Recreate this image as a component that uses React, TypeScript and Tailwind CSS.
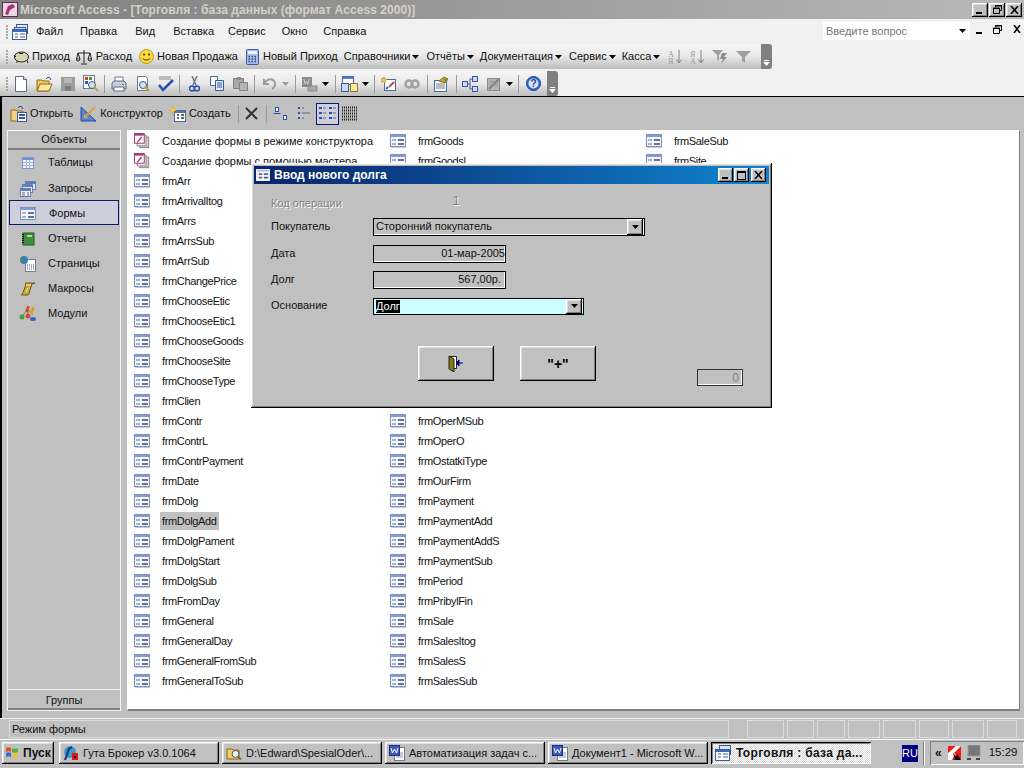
import React from "react";

const raised =
  "shadow-[inset_-1px_-1px_0_#000,inset_1px_1px_0_#fff,inset_-2px_-2px_0_#808080,inset_2px_2px_0_#dfdfdf]";

const FormIcon = ({ className = "" }: { className?: string }) => (
  <svg width="16" height="14" viewBox="0 0 16 14" className={className}>
    <rect x="0.5" y="0.5" width="15" height="12" fill="#f4f6fb" stroke="#7c92bc" />
    <rect x="1" y="1" width="14" height="2" fill="#7f9cd8" />
    <rect x="2" y="5" width="4" height="2" fill="#a9b4c8" />
    <rect x="8" y="5" width="6" height="2" fill="#66738f" />
    <rect x="2" y="9" width="4" height="2" fill="#a9b4c8" />
    <rect x="8" y="9" width="6" height="2" fill="#66738f" />
    <rect x="1" y="13" width="15" height="1" fill="#c4cad6" />
  </svg>
);

const WizardIcon = () => (
  <svg width="18" height="18" viewBox="0 0 18 18">
    <rect x="6.500" y="4.500" width="10" height="12" fill="#d8d4c8" stroke="#7f7f7f" />
    <rect x="3.500" y="2.500" width="10" height="12" fill="#eeeeee" stroke="#8a7a8a" />
    <rect x="0.500" y="0.500" width="11" height="11" fill="#fff" stroke="#8d2a62" />
    <rect x="1" y="1" width="10" height="2" fill="#b03a80" />
    <path d="M3 10 L8 4 L9 5 L4 11Z" fill="#a52a6a" />
    <path d="M14 15h3v2h-3z" fill="#999" />
  </svg>
);

const Caret = ({ c = "#000" }: { c?: string }) => (
  <svg width="7" height="4" viewBox="0 0 7 4" className="ml-[2px] shrink-0">
    <path d="M0 0h7L3.5 4z" fill={c} />
  </svg>
);

const Grip = () => (
  <div className="flex flex-col gap-[1px] w-[2px] h-[17px] justify-center shrink-0">
    {[0, 1, 2, 3, 4].map((i) => (
      <div key={i} className="w-[2px] h-[2px] bg-[#a8a8a8]" />
    ))}
  </div>
);

const Sep = ({ className = "" }: { className?: string }) => (
  <div className={"w-[1px] h-[18px] bg-[#9a9a9a] shrink-0 " + className} />
);

const EndCap = () => (
  <div className="absolute right-0 top-0 bottom-0 w-[11px] bg-[#808080] rounded-r-[3px] flex flex-col items-center justify-end pb-[3px] gap-[1px]">
    <div className="w-[5px] h-[1px] bg-white" />
    <svg width="7" height="4" viewBox="0 0 7 4">
      <path d="M0 0h7L3.5 4z" fill="#fff" />
    </svg>
  </div>
);

const tbBg = "bg-[linear-gradient(#f6f6f6,#e8e8e8_50%,#bcbcbc)]";

const Icon = ({ ml, children }: { ml: string; children: React.ReactNode }) => (
  <div className={"shrink-0 flex items-center " + ml}>{children}</div>
);

const ListItem = ({ name, wizard, selected }: { name: string; wizard?: boolean; selected?: boolean }) => (
  <div className="h-[20px] flex items-center whitespace-nowrap">
    <div className="w-[16px] ml-[6px] flex justify-center shrink-0">{wizard ? <WizardIcon /> : <FormIcon />}</div>
    <div className={"ml-[10px] px-[2px] h-[18px] leading-[18px] " + (wizard ? "" : "tracking-[-0.35px] ") + (selected ? "bg-[#c0c0c0]" : "")}>{name}</div>
  </div>
);

const col1 = [
  "frmArr", "frmArrivalItog", "frmArrs", "frmArrsSub", "frmArrSub", "frmChangePrice", "frmChooseEtic", "frmChooseEtic1",
  "frmChooseGoods", "frmChooseSite", "frmChooseType", "frmClien", "frmContr", "frmContrL", "frmContrPayment", "frmDate",
  "frmDolg", "frmDolgAdd", "frmDolgPament", "frmDolgStart", "frmDolgSub", "frmFromDay", "frmGeneral", "frmGeneralDay",
  "frmGeneralFromSub", "frmGeneralToSub",
];
const col2top = ["frmGoods", "frmGoodsl"];
const col2 = [
  "frmOperMSub", "frmOperO", "frmOstatkiType", "frmOurFirm", "frmPayment", "frmPaymentAdd", "frmPaymentAddS",
  "frmPaymentSub", "frmPeriod", "frmPribylFin", "frmSale", "frmSalesItog", "frmSalesS", "frmSalesSub",
];

const sideItems = ["Таблицы", "Запросы", "Формы", "Отчеты", "Страницы", "Макросы", "Модули"];

const SideIcon = ({ i }: { i: number }) => {
  if (i === 0)
    return (
      <svg width="16" height="16" viewBox="0 0 16 16">
        <rect x="2.5" y="2.5" width="11" height="11" fill="#eef2fa" stroke="#7c96c8" />
        <rect x="3" y="3" width="10" height="2" fill="#6f8fd0" />
        <path d="M3 7.5h10M3 10.5h10M6.5 5v8M9.5 5v8" stroke="#a4b4d4" />
      </svg>
    );
  if (i === 1)
    return (
      <svg width="16" height="16" viewBox="0 0 16 16">
        <rect x="5.5" y="0.5" width="10" height="8" fill="#dfe7f6" stroke="#6680b4" />
        <rect x="6" y="1" width="9" height="2" fill="#5b7cc0" />
        <rect x="2.5" y="3.5" width="10" height="8" fill="#e8edf8" stroke="#6680b4" />
        <rect x="3" y="4" width="9" height="2" fill="#5b7cc0" />
        <rect x="0.5" y="7.5" width="10" height="8" fill="#f4f6fb" stroke="#6680b4" />
        <rect x="1" y="8" width="9" height="2" fill="#5b7cc0" />
        <path d="M2 12h3M2 14h3M7 12h2M7 14h2" stroke="#55648a" />
      </svg>
    );
  if (i === 2) return <FormIcon />;
  if (i === 3)
    return (
      <svg width="16" height="16" viewBox="0 0 16 16">
        <rect x="3" y="2" width="11" height="12" fill="#3f8f3a" stroke="#1f5a22" />
        <path d="M3 3v10" stroke="#111" strokeWidth="2" strokeDasharray="1 1" />
        <rect x="7" y="4" width="5" height="2" fill="#a9d8a0" />
      </svg>
    );
  if (i === 4)
    return (
      <svg width="18" height="16" viewBox="0 0 18 16">
        <rect x="6.5" y="3.5" width="10" height="12" fill="#fff" stroke="#6d7b95" />
        <path d="M8 9h7M8 11h7M8 13h7" stroke="#4a5a80" strokeDasharray="1 1" />
        <circle cx="5" cy="4" r="4" fill="#3b78c8" />
        <path d="M2 2.5c2-1 3 .5 3 2s-2 2-3 1zM6 1c2 0 2 2 1 3z" fill="#3f9a3a" />
      </svg>
    );
  if (i === 5)
    return (
      <svg width="16" height="16" viewBox="0 0 16 16">
        <path d="M5 2h10l-3 1-2 6-1 4-1 1H1l2-2 2-6 1-3z" fill="#c9a83a" stroke="#6b5a18" />
        <path d="M6 4h5M8 7l-2 4" stroke="#fff2a8" />
      </svg>
    );
  return (
    <svg width="18" height="16" viewBox="0 0 18 16">
      <path d="M4 9l5-6 5 6M9 3v8" stroke="#8c8c5a" fill="none" />
      <rect x="7" y="0" width="3" height="6" fill="#d04a2a" transform="rotate(20 8 3)" />
      <rect x="12" y="1" width="3" height="6" fill="#d8a020" transform="rotate(25 13 4)" />
      <circle cx="3" cy="11" r="2.5" fill="#3fa03a" />
      <circle cx="9" cy="10" r="2.5" fill="#d84a3a" />
      <ellipse cx="14" cy="13" rx="3" ry="2" fill="#3a66c0" />
    </svg>
  );
};

const Toolbar2 = () => (
  <div className={"relative h-[25px] w-[558px] flex items-center pl-[6px] rounded-r-[3px] " + tbBg}>
    <Grip />
    <Icon ml="ml-[7px]">
      <svg width="12" height="16" viewBox="0 0 12 16">
        <path d="M.5.5h8l3 3v12H.5z" fill="#fff" stroke="#5a6a80" />
        <path d="M8.500.5v3h3" fill="#dfe6f0" stroke="#5a6a80" />
      </svg>
    </Icon>
    <Icon ml="ml-[9px]">
      <svg width="17" height="16" viewBox="0 0 17 16">
        <path d="M1 4h5l1 1h6v10H1z" fill="#f0c860" stroke="#8a6a20" />
        <path d="M1 15l3-7h12l-3 7z" fill="#ffe79a" stroke="#8a6a20" />
        <path d="M10 3c1-2 3-2 4-1l1 2" stroke="#2a4a9a" fill="none" />
      </svg>
    </Icon>
    <Icon ml="ml-[7px]">
      <svg width="16" height="16" viewBox="0 0 16 16">
        <path d="M1 1h14v14H1z" fill="#9c9c9c" />
        <path d="M4 2h8v5H4z" fill="#b8b8b8" />
        <path d="M5 10h6v5H5z" fill="#7c7c7c" />
      </svg>
    </Icon>
    <Icon ml="ml-[6px]">
      <svg width="17" height="17" viewBox="0 0 17 17">
        <rect x="1.500" y="0.500" width="11" height="13" fill="#fff" stroke="#6a7a90" />
        <rect x="3" y="2" width="3" height="3" fill="#d83a2a" />
        <rect x="7" y="2" width="3" height="3" fill="#3f9a3a" />
        <rect x="3" y="6" width="3" height="3" fill="#2a5ac0" />
        <circle cx="10" cy="10" r="3.500" fill="#cfe4f8" stroke="#44546a" />
        <path d="M12 12l4 4" stroke="#c89a30" strokeWidth="2" />
      </svg>
    </Icon>
    <Sep className="ml-[5px]" />
    <Icon ml="ml-[6px]">
      <svg width="16" height="16" viewBox="0 0 16 16">
        <path d="M4 1h8v5H4z" fill="#fff" stroke="#6a7a90" />
        <path d="M1 7l2-2h10l2 2v6H1z" fill="#c8cedc" stroke="#5a6a80" />
        <rect x="3" y="11" width="10" height="4" fill="#fff" stroke="#5a6a80" />
        <rect x="11" y="8" width="2" height="1" fill="#3fa03a" />
      </svg>
    </Icon>
    <Icon ml="ml-[8px]">
      <svg width="16" height="16" viewBox="0 0 16 16">
        <path d="M2.500.5h8l2 2v12h-10z" fill="#fff" stroke="#6a7a90" />
        <circle cx="8" cy="9" r="3.500" fill="#cfe4f8" stroke="#44546a" />
        <path d="M10 11l4 4" stroke="#c89a30" strokeWidth="2" />
      </svg>
    </Icon>
    <Icon ml="ml-[6px]">
      <svg width="17" height="16" viewBox="0 0 17 16">
        <rect x="2" y="0" width="12" height="4" fill="#bbb" />
        <path d="M2 9l4 5L16 4" stroke="#2a4fb0" strokeWidth="2.500" fill="none" />
      </svg>
    </Icon>
    <Sep className="ml-[5px]" />
    <Icon ml="ml-[9px]">
      <svg width="11" height="16" viewBox="0 0 11 16">
        <path d="M3 0l4 9M8 0L4 9" stroke="#6a7a90" strokeWidth="1.500" />
        <circle cx="3" cy="12.500" r="2.500" fill="none" stroke="#2a4fb0" strokeWidth="1.500" />
        <circle cx="8" cy="12.500" r="2.500" fill="none" stroke="#2a4fb0" strokeWidth="1.500" />
      </svg>
    </Icon>
    <Icon ml="ml-[9px]">
      <svg width="16" height="15" viewBox="0 0 16 15">
        <path d="M1.500.5h7v9h-7z" fill="#fff" stroke="#4a6a9a" />
        <path d="M6.500 4.500h8v10h-8z" fill="#dfe8f8" stroke="#3a5a9a" />
        <path d="M8 7h5M8 9h5M8 11h5" stroke="#3a5a9a" />
      </svg>
    </Icon>
    <Icon ml="ml-[7px]">
      <svg width="16" height="15" viewBox="0 0 16 15">
        <path d="M1.500 2.500h10v10h-10z" fill="#a8a8a8" stroke="#808080" />
        <path d="M5 1h4v3H5z" fill="#8c8c8c" />
        <path d="M7.500 6.500h8v8h-8z" fill="#b4b4b4" stroke="#808080" />
      </svg>
    </Icon>
    <Sep className="ml-[6px]" />
    <Icon ml="ml-[8px]">
      <svg width="13" height="12" viewBox="0 0 13 12">
        <path d="M1 1v5h5M1.500 6C3 1 10-1 12 5c.5 2-1 5-3 6" stroke="#9c9c9c" strokeWidth="2" fill="none" />
      </svg>
    </Icon>
    <Icon ml="ml-[4px]">
      <Caret c="#9c9c9c" />
    </Icon>
    <Sep className="ml-[6px]" />
    <Icon ml="ml-[5px]">
      <svg width="17" height="16" viewBox="0 0 17 16">
        <rect x="1" y="1" width="10" height="10" fill="#8c8c8c" />
        <path d="M3 3l1 5 1.500-3L7 8l1-5" stroke="#cfcfcf" fill="none" />
        <rect x="7" y="10" width="9" height="5" fill="#a8a8a8" stroke="#8a8a8a" />
      </svg>
    </Icon>
    <Icon ml="ml-[2px]">
      <Caret />
    </Icon>
    <Sep className="ml-[6px]" />
    <Icon ml="ml-[5px]">
      <svg width="17" height="16" viewBox="0 0 17 16">
        <rect x="1.500" y="0.500" width="11" height="8" fill="#fff" stroke="#4a6a9a" />
        <rect x="2" y="1" width="10" height="2" fill="#5b7cc0" />
        <rect x="0.500" y="7.500" width="7" height="8" fill="#cbd9f2" stroke="#3a5a9a" />
        <rect x="9.500" y="7.500" width="7" height="8" fill="#ffe79a" stroke="#8a7a30" />
      </svg>
    </Icon>
    <Icon ml="ml-[2px]">
      <Caret />
    </Icon>
    <Sep className="ml-[5px]" />
    <Icon ml="ml-[6px]">
      <svg width="16" height="16" viewBox="0 0 16 16">
        <rect x="3.500" y="3.500" width="11" height="11" fill="#fff" stroke="#4a6a9a" />
        <path d="M3 1l1 2 2 .5L4 5 4 7 2.500 5.500.5 6l1-2L.5 2.500 2.500 2.500z" fill="#ffd23a" stroke="#c89a30" />
        <path d="M8 11l5-5" stroke="#c04a2a" strokeWidth="2" />
        <path d="M5 13l2-2" stroke="#3a5ac0" strokeWidth="2" />
      </svg>
    </Icon>
    <Icon ml="ml-[7px]">
      <svg width="16" height="16" viewBox="0 0 16 16">
        <circle cx="5" cy="8" r="3.500" fill="none" stroke="#a0a0a0" strokeWidth="2.500" />
        <circle cx="11" cy="8" r="3.500" fill="none" stroke="#a0a0a0" strokeWidth="2.500" />
      </svg>
    </Icon>
    <Sep className="ml-[7px]" />
    <Icon ml="ml-[5px]">
      <svg width="16" height="16" viewBox="0 0 16 16">
        <rect x="1.500" y="4.500" width="12" height="11" fill="#fff" stroke="#4a6a9a" />
        <path d="M3 8h9M3 10h9M3 12h9" stroke="#6a7a90" />
        <path d="M6 5l5-4 4 2-3 4z" fill="#d8a030" stroke="#8a6a20" />
        <path d="M11 3l3 2" stroke="#3fa03a" strokeWidth="2" />
      </svg>
    </Icon>
    <Sep className="ml-[7px]" />
    <Icon ml="ml-[5px]">
      <svg width="16" height="16" viewBox="0 0 16 16">
        <path d="M4 8h4M8 3v10M8 3h2M8 13h2" stroke="#3a5a9a" />
        <rect x="0.500" y="5.500" width="5" height="5" fill="#cbd9f2" stroke="#3a5a9a" />
        <rect x="10.500" y="0.500" width="5" height="5" fill="#cbd9f2" stroke="#3a5a9a" />
        <rect x="10.500" y="10.500" width="5" height="5" fill="#cbd9f2" stroke="#3a5a9a" />
      </svg>
    </Icon>
    <Icon ml="ml-[8px]">
      <svg width="16" height="16" viewBox="0 0 16 16">
        <rect x="1.500" y="2.500" width="12" height="12" fill="#b4b4b4" stroke="#8c8c8c" />
        <path d="M3 13L13 3" stroke="#808080" strokeWidth="2" />
        <path d="M4 6h8M4 9h8" stroke="#8c8c8c" />
      </svg>
    </Icon>
    <Icon ml="ml-[2px]">
      <Caret />
    </Icon>
    <Sep className="ml-[5px]" />
    <Icon ml="ml-[7px]">
      <svg width="15" height="15" viewBox="0 0 15 15">
        <circle cx="7.500" cy="7.500" r="7" fill="#2f68d8" stroke="#1d3f90" />
        <circle cx="7.500" cy="7.500" r="5" fill="#d8e6fb" />
        <text x="7.500" y="11" textAnchor="middle" fontSize="10" fontWeight="700" fontFamily="Liberation Sans" fill="#1d3f90">?</text>
      </svg>
    </Icon>
    <EndCap />
  </div>
);

const App = () => {
  return (
    <div className="relative w-[1024px] h-[768px] overflow-hidden bg-[#c0c0c0] flex flex-col text-[11px] text-[#111] whitespace-nowrap font-['Liberation_Sans',Arial,sans-serif]">
      {/* main title bar */}
      <div className="h-[19px] shrink-0 flex items-center pl-[2px] pr-[2px] bg-[linear-gradient(90deg,#808080,#b8b8b8)]">
        <svg width="16" height="15" viewBox="0 0 16 15" className="shrink-0">
          <rect x="0.500" y="0.500" width="15" height="14" fill="#e8d8e4" stroke="#6a2a50" />
          <path d="M3 12l3-8 5-2 2 3-5 3-2 5z" fill="#a8327a" />
        </svg>
        <span className="ml-[2px] text-[#d4d0c8] font-bold text-[12px] tracking-[0.05px]">
          Microsoft Access - [Торговля : база данных (формат Access 2000)]
        </span>
        <div className="ml-auto flex gap-[1px]">
          {["min", "max", "close"].map((k) => (
            <div key={k} className={"w-[16px] h-[14px] bg-[#c0c0c0] flex items-center justify-center " + raised}>
              {k === "min" && <div className="w-[6px] h-[2px] bg-black mt-[7px] mr-[2px]" />}
              {k === "max" && (
                <svg width="9" height="9" viewBox="0 0 9 9">
                  <path d="M2.500 2V.5h6v5H7M.5 3h6v5.500h-6z" fill="none" stroke="#000" />
                  <path d="M2 1h7M0 3.500h7" stroke="#000" />
                </svg>
              )}
              {k === "close" && (
                <svg width="9" height="8" viewBox="0 0 9 8">
                  <path d="M1 0l7 8M8 0L1 8" stroke="#000" strokeWidth="1.500" />
                </svg>
              )}
            </div>
          ))}
        </div>
      </div>

      {/* command bars */}
      <div className="bg-[#f1f1f1] h-[77px] shrink-0 flex flex-col">
        <div className="relative h-[25px] flex items-center pl-[6px]">
          <Grip />
          <Icon ml="ml-[4px]">
            <svg width="16" height="16" viewBox="0 0 16 16">
              <rect x="4.500" y="0.500" width="11" height="9" fill="#dfe7f6" stroke="#3a5a9a" />
              <rect x="2.500" y="3.500" width="11" height="9" fill="#cbd9f2" stroke="#3a5a9a" />
              <rect x="0.500" y="5.500" width="14" height="10" fill="#fff" stroke="#3a5a9a" />
              <rect x="1" y="6" width="13" height="2" fill="#3f68c0" />
              <path d="M3 10h3M8 10h5M3 13h3M8 13h5" stroke="#3a5a9a" />
            </svg>
          </Icon>
          <span className="ml-[8px]">Файл</span>
          <span className="ml-[17px]">Правка</span>
          <span className="ml-[18px]">Вид</span>
          <span className="ml-[18px]">Вставка</span>
          <span className="ml-[14px]">Сервис</span>
          <span className="ml-[16px]">Окно</span>
          <span className="ml-[16px]">Справка</span>
          <div className="absolute left-[823px] top-[3px] w-[147px] h-[18px] bg-white flex items-center pl-[3px] pr-[4px] text-[#777]">
            Введите вопрос
            <div className="ml-auto"><Caret /></div>
          </div>
          <div className="absolute left-[976px] top-[5px] flex items-center gap-[11px]">
            <div className="w-[6px] h-[2px] bg-black mt-[8px]" />
            <svg width="9" height="9" viewBox="0 0 9 9">
              <path d="M2.500 2V.5h6v5H7M.5 3h6v5.500h-6z" fill="none" stroke="#000" />
              <path d="M2 1h7M0 3.500h7" stroke="#000" />
            </svg>
            <svg width="8" height="8" viewBox="0 0 8 8">
              <path d="M1 0l6 8M7 0L1 8" stroke="#000" strokeWidth="1.500" />
            </svg>
          </div>
        </div>

        <div className={"relative h-[25px] w-[772px] flex items-center pl-[6px] rounded-r-[3px] " + tbBg}>
          <Grip />
          <Icon ml="ml-[5px]">
            <svg width="17" height="14" viewBox="0 0 17 14">
              <ellipse cx="8.500" cy="7" rx="7" ry="5" fill="#d8d8b0" stroke="#222" />
              <path d="M1 5l2 2M14 10l1 3M4 11l0 2" stroke="#222" />
              <path d="M6 3.500h4" stroke="#222" />
            </svg>
          </Icon>
          <span className="ml-[2px]">Приход</span>
          <Icon ml="ml-[6px]">
            <svg width="16" height="16" viewBox="0 0 16 16">
              <path d="M8 1v13M5 15h6M2 4h12M2 4L0.500 10M2 4l2 6M14 4l-2 6M14 4l1.500 6" stroke="#222" fill="none" />
              <path d="M0 10a2 2 0 0 0 4 0zM12 10a2 2 0 0 0 4 0z" fill="#fff" stroke="#222" />
            </svg>
          </Icon>
          <span className="ml-[4px]">Расход</span>
          <Icon ml="ml-[7px]">
            <svg width="15" height="15" viewBox="0 0 15 15">
              <circle cx="7.500" cy="7.500" r="7" fill="#ffd93a" stroke="#b89a20" />
              <circle cx="5" cy="5.500" r="1" fill="#222" />
              <circle cx="10" cy="5.500" r="1" fill="#222" />
              <path d="M4 9.500c1 2 6 2 7 0" stroke="#222" fill="none" />
            </svg>
          </Icon>
          <span className="ml-[3px]">Новая Продажа</span>
          <Icon ml="ml-[8px]">
            <svg width="13" height="16" viewBox="0 0 13 16">
              <rect x="0.500" y="0.500" width="12" height="15" rx="1" fill="#a9bde6" stroke="#3a5a9a" />
              <rect x="2" y="2" width="9" height="3" fill="#eef2fa" />
              <path d="M2.500 7.500h8M2.500 10h8M2.500 12.500h8" stroke="#2a3f7a" strokeWidth="1.500" strokeDasharray="1.500 1.500" />
            </svg>
          </Icon>
          <span className="ml-[4px]">Новый Приход</span>
          <span className="ml-[6px] flex items-center">Справочники<Caret /></span>
          <span className="ml-[7px] flex items-center">Отчёты<Caret /></span>
          <span className="ml-[6px] flex items-center">Документация<Caret /></span>
          <span className="ml-[7px] flex items-center">Сервис<Caret /></span>
          <span className="ml-[6px] flex items-center">Касса<Caret /></span>
          <Icon ml="ml-[8px]">
            <svg width="16" height="16" viewBox="0 0 16 16">
              <text x="0" y="8" fontSize="8" fontFamily="Liberation Serif" fill="#9a9a9a">А</text>
              <text x="0" y="15" fontSize="8" fontFamily="Liberation Serif" fill="#9a9a9a">Я</text>
              <path d="M11 1v12M8.500 10.500L11 14l2.500-3.500" stroke="#808080" fill="none" />
            </svg>
          </Icon>
          <Icon ml="ml-[6px]">
            <svg width="16" height="16" viewBox="0 0 16 16">
              <text x="0" y="8" fontSize="8" fontFamily="Liberation Serif" fill="#9a9a9a">Я</text>
              <text x="0" y="15" fontSize="8" fontFamily="Liberation Serif" fill="#9a9a9a">А</text>
              <path d="M11 1v12M8.500 10.500L11 14l2.500-3.500" stroke="#808080" fill="none" />
            </svg>
          </Icon>
          <Icon ml="ml-[6px]">
            <svg width="17" height="16" viewBox="0 0 17 16">
              <path d="M0 1h11L7 6v6L5 10V6z" fill="#a0a0a0" />
              <path d="M10 4h5l-3 4h3l-6 7 2-5H8z" fill="#8c8c8c" />
            </svg>
          </Icon>
          <Icon ml="ml-[7px]">
            <svg width="15" height="14" viewBox="0 0 15 14">
              <path d="M0 1h15L9 7v6L6 11V7z" fill="#a0a0a0" />
            </svg>
          </Icon>
          <EndCap />
        </div>
        <div className="h-[2px]" />
        <Toolbar2 />
      </div>

      {/* database window */}
      <div className="flex-1 flex flex-col border-t border-l-2 border-black min-h-0 pb-[7px]">
        <div className="h-[33px] shrink-0 flex items-center pl-[8px]">
          <Icon ml="ml-0">
            <svg width="17" height="17" viewBox="0 0 17 17">
              <path d="M1 5h5l1 1h6v10H1z" fill="#f0cf80" stroke="#8a6a20" />
              <rect x="7.500" y="7.500" width="9" height="9" fill="#f4f6fb" stroke="#3a5a9a" />
              <path d="M9 10h6M9 13h6" stroke="#3a5a9a" strokeWidth="2" />
              <path d="M8 3c1-2 3-2 4-1l1 2" stroke="#2a4a9a" fill="none" />
            </svg>
          </Icon>
          <span className="ml-[3px]">Открыть</span>
          <Icon ml="ml-[7px]">
            <svg width="17" height="16" viewBox="0 0 17 16">
              <path d="M1 1v14h15z" fill="#5a82d0" stroke="#2a4a9a" />
              <path d="M4 8v4h4z" fill="#c0c0c0" />
              <path d="M4 12L15 1" stroke="#e0a030" strokeWidth="2" />
            </svg>
          </Icon>
          <span className="ml-[3px]">Конструктор</span>
          <Icon ml="ml-[6px]">
            <svg width="17" height="16" viewBox="0 0 17 16">
              <rect x="5.500" y="4.500" width="11" height="11" fill="#fff" stroke="#4a6a9a" />
              <rect x="6" y="5" width="10" height="2" fill="#4f74bd" />
              <path d="M8 9h2M12 9h3M8 12h2M12 12h3" stroke="#333" strokeWidth="1.500" />
              <path d="M4 0l1 3 3 1-3 1-1 3-1-3-3-1 3-1z" fill="#ffd93a" stroke="#d8a020" strokeWidth="0.500" />
            </svg>
          </Icon>
          <span className="ml-[3px]">Создать</span>
          <Sep className="ml-[7px]" />
          <Icon ml="ml-[6px]">
            <svg width="13" height="13" viewBox="0 0 13 13">
              <path d="M1 1l11 11M12 1L1 12" stroke="#333" strokeWidth="2" />
            </svg>
          </Icon>
          <Sep className="ml-[8px]" />
          <Icon ml="ml-[6px]">
            <svg width="15" height="15" viewBox="0 0 15 15">
              <rect x="2.500" y="1.500" width="3" height="4" fill="#fff" stroke="#2a4fb0" />
              <path d="M0.500 7.500h7" stroke="#2a4fb0" />
              <rect x="10.500" y="9.500" width="3" height="4" fill="#fff" stroke="#2a4fb0" />
            </svg>
          </Icon>
          <Icon ml="ml-[9px]">
            <svg width="15" height="15" viewBox="0 0 15 15">
              <path d="M1 2h2M1 7h2M1 12h2" stroke="#2a4fb0" strokeWidth="2" />
              <path d="M5 2h2M5 7h8M5 12h2" stroke="#667" />
            </svg>
          </Icon>
          <div className="ml-[4px] w-[23px] h-[22px] border border-[#0a1a7a] flex items-center justify-center bg-[#cfcfdc] shrink-0">
            <svg width="19" height="15" viewBox="0 0 19 15">
              <path d="M1 2h3M1 7h3M1 12h3M11 2h3M11 7h3M11 12h3" stroke="#2a4fb0" strokeWidth="2" />
              <path d="M5 2h3M5 7h3M5 12h3M15 2h3M15 7h3M15 12h3" stroke="#667" />
            </svg>
          </div>
          <Icon ml="ml-[3px]">
            <svg width="16" height="15" viewBox="0 0 16 15">
              <path d="M0 1.500h16M0 4.500h16M0 7.500h16M0 10.500h16M0 13.500h16" stroke="#222" strokeDasharray="1 1" strokeWidth="2" />
            </svg>
          </Icon>
        </div>

        <div className="flex-1 flex min-h-0 pl-[5px] pr-[4px]">
          {/* objects bar */}
          <div className="w-[114px] shrink-0 border border-[#f4f4f4] flex flex-col">
            <div className="h-[19px] shrink-0 flex items-center justify-center border-b-2 border-[#808080]">Объекты</div>
            <div className="flex-1 flex flex-col">
              {sideItems.map((s, i) =>
                i === 2 ? (
                  <div key={s} className="h-[25px] flex items-center pt-[2px] bg-[#cdcddb] border border-[#0a1a6a] mx-[1px]">
                    <div className="w-[16px] ml-[10px] flex justify-center"><SideIcon i={i} /></div>
                    <span className="ml-[13px]">{s}</span>
                  </div>
                ) : (
                  <div key={s} className={"h-[25px] flex items-center " + (i === 0 ? "" : "pt-[2px]")}>
                    <div className="w-[18px] ml-[11px] flex justify-center"><SideIcon i={i} /></div>
                    <span className="ml-[11px]">{s}</span>
                  </div>
                )
              )}
            </div>
            <div className="h-[21px] shrink-0 flex items-center justify-center pt-[2px] border-t border-[#f4f4f4] border-b-2 border-b-[#808080]">Группы</div>
          </div>

          {/* form list */}
          <div className="ml-[6px] flex-1 bg-white border-t border-l border-white border-r border-r-[#808080] border-b-2 border-b-[#808080] flex">
            <div className="w-[256px] shrink-0">
              <ListItem wizard name="Создание формы в режиме конструктора" />
              <ListItem wizard name="Создание формы с помощью мастера" />
              {col1.map((n) => (
                <ListItem key={n} name={n} selected={n === "frmDolgAdd"} />
              ))}
            </div>
            <div className="w-[256px] shrink-0">
              {col2top.map((n) => (
                <ListItem key={n} name={n} />
              ))}
              <div className="h-[240px]" />
              {col2.map((n) => (
                <ListItem key={n} name={n} />
              ))}
            </div>
            <div className="w-[256px] shrink-0">
              <ListItem name="frmSaleSub" />
              <ListItem name="frmSite" />
            </div>
          </div>
        </div>
      </div>

      {/* status bar */}
      <div className="h-[21px] shrink-0 border-t border-[#f4f4f4] flex items-stretch pt-[1px] pb-[1px] pl-[9px] gap-[3px]">
        <div className="w-[720px] mr-[15px] flex items-center pl-[2px] border border-[#dcdcdc]">Режим формы</div>
        <div className="w-[37px] border border-[#dcdcdc]" />
        <div className="w-[27px] border border-[#dcdcdc]" />
        <div className="w-[28px] border border-[#dcdcdc]" />
        <div className="w-[32px] border border-[#dcdcdc]" />
        <div className="w-[33px] border border-[#dcdcdc]" />
        <div className="w-[30px] border border-[#dcdcdc]" />
        <div className="w-[32px] border border-[#dcdcdc]" />
        <div className="w-[30px] border border-[#dcdcdc]" />
      </div>

      {/* taskbar */}
      <div className="h-[29px] shrink-0 border-t border-[#f4f4f4] flex items-start pl-[2px] pt-[2px]">
        <div className={"w-[52px] h-[22px] flex items-center pl-[3px] font-bold text-[12px] " + raised}>
          <svg width="15" height="14" viewBox="0 0 15 14" className="shrink-0">
            <path d="M1 2c2-1 3-1 5 0v4C4 5 3 5 1 6z" fill="#e0502a" />
            <path d="M7 2c2 1 4 1 6 0v4c-2 1-4 1-6 0z" fill="#5ab03a" />
            <path d="M1 7c2-1 3-1 5 0v4c-2-1-3-1-5 0z" fill="#3a6ad0" />
            <path d="M7 7c2 1 4 1 6 0v4c-2 1-4 1-6 0z" fill="#f0c030" />
          </svg>
          <span className="ml-[3px]">Пуск</span>
        </div>
        <TaskButton ml="ml-[5px]" label="Гута Брокер v3.0.1064" icon={
          <svg width="16" height="16" viewBox="0 0 16 16">
            <circle cx="7" cy="7" r="6" fill="#3a9ac8" />
            <path d="M2 15L6 4l3-2" stroke="#1a2a7a" strokeWidth="2" fill="none" />
            <rect x="9" y="8" width="6" height="7" fill="#e01818" />
            <rect x="11" y="11" width="2" height="2" fill="#111" />
          </svg>
        } />
        <TaskButton ml="ml-[3px]" label="D:\Edward\SpesialOder\..." icon={
          <svg width="16" height="15" viewBox="0 0 16 15">
            <path d="M1 3h5l1 1h6v9H1z" fill="#f0cf60" stroke="#8a6a20" />
            <circle cx="9.500" cy="8" r="3.500" fill="#e4f0fa" stroke="#555" />
            <path d="M12 10.500l3 3" stroke="#8a6a20" strokeWidth="2" />
          </svg>
        } />
        <TaskButton ml="ml-[3px]" label="Автоматизация задач с..." icon={<WordIcon />} />
        <TaskButton ml="ml-[3px]" label="Документ1 - Microsoft W..." icon={<WordIcon />} />
        <div className="ml-[3px] w-[160px] h-[22px] flex items-center pl-[4px] bg-[repeating-conic-gradient(#ffffff_0%_25%,#d8d8d8_0%_50%)] bg-[length:2px_2px] shadow-[inset_1px_1px_0_#000,inset_-1px_-1px_0_#fff,inset_2px_2px_0_#808080] font-bold text-[12px] tracking-[0.3px]">
          <svg width="16" height="16" viewBox="0 0 16 16" className="shrink-0">
            <rect x="4.500" y="0.500" width="11" height="9" fill="#dfe7f6" stroke="#3a5a9a" />
            <rect x="0.500" y="4.500" width="14" height="11" fill="#fff" stroke="#3a5a9a" />
            <rect x="1" y="5" width="13" height="2" fill="#3f68c0" />
            <path d="M3 9h3M8 9h5M3 12h3M8 12h5" stroke="#3a5a9a" />
          </svg>
          <span className="ml-[5px]">Торговля : база да...</span>
        </div>
        <div className="ml-[31px] mt-[3px] w-[16px] h-[17px] bg-[#000080] text-white flex items-center justify-center text-[11px]">RU</div>
        <div className="ml-[5px] -mt-[1px] w-[2px] h-[24px] bg-[#808080] border-r border-white" />
        <div className="ml-[5px] -mt-[1px] w-[94px] h-[24px] flex items-center pl-[5px] shadow-[inset_1px_1px_0_#808080,inset_-1px_-1px_0_#fff]">
          <span className="font-bold text-[12px]">«</span>
          <svg width="14" height="14" viewBox="0 0 14 14" className="ml-[6px] shrink-0">
            <rect x="0" y="0" width="13" height="14" fill="#f01818" />
            <path d="M0 7L8 0h5L6 7l7 7-3-1-4-3-2 4H0z" fill="#fff" />
            <path d="M5 7l3 3 1-2 4 6H7z" fill="#111" />
          </svg>
          <svg width="14" height="16" viewBox="0 0 14 16" className="ml-[5px] shrink-0">
            <rect x="1" y="0" width="12" height="11" fill="#777" stroke="#999" />
            <path d="M0 14h4M9 14h4" stroke="#444" strokeWidth="2" />
          </svg>
          <span className="ml-[8px] text-[11.5px]">15:29</span>
        </div>
      </div>

      {/* form window */}
      <div className={"absolute left-[251px] top-[163px] w-[521px] h-[245px] bg-[#c0c0c0] p-[3px] " + raised}>
        <div className="h-[18px] flex items-center pl-[2px] pr-[2px] bg-[linear-gradient(90deg,#0a246a,#1084d0)]">
          <svg width="14" height="12" viewBox="0 0 16 14" className="shrink-0">
            <rect x="0.500" y="0.500" width="15" height="13" fill="#f4f6fb" stroke="#fff" />
            <rect x="1" y="1" width="14" height="2" fill="#a9c0ea" />
            <path d="M3 6h4M9 6h5M3 10h4M9 10h5" stroke="#55648a" strokeWidth="2" />
          </svg>
          <span className="ml-[4px] text-white font-bold text-[12px]">Ввод нового долга</span>
          <div className="ml-auto flex mr-[1px]">
            <div className={"w-[15px] h-[14px] bg-[#c0c0c0] flex items-end pl-[4px] pb-[3px] " + raised}>
              <div className="w-[6px] h-[2px] bg-black" />
            </div>
            <div className={"w-[15px] h-[14px] bg-[#c0c0c0] ml-[1px] flex items-center justify-center " + raised}>
              <div className="w-[9px] h-[9px] border border-black border-t-2" />
            </div>
            <div className={"w-[15px] h-[14px] bg-[#c0c0c0] ml-[2px] flex items-center justify-center " + raised}>
              <svg width="9" height="8" viewBox="0 0 9 8">
                <path d="M1 0l7 8M8 0L1 8" stroke="#000" strokeWidth="1.500" />
              </svg>
            </div>
          </div>
        </div>

        <div className="relative pl-[17px] pt-[10px]">
          <div className="h-[19px] flex items-center text-[#808080] [text-shadow:1px_1px_0_#fff]">
            <span className="w-[102px]">Код операции</span>
            <span className="ml-[80px] -mt-[6px] text-[12px]">1</span>
          </div>
          <div className="mt-[5px] flex items-center h-[18px]">
            <span className="w-[102px] -mt-[1px]">Покупатель</span>
            <div className="w-[272px] h-[18px] border border-black flex items-center pl-[2px] pb-[1px] relative shadow-[inset_-1px_-1px_0_#fff]">
              Сторонний покупатель
              <ComboBtn />
            </div>
          </div>
          <div className="mt-[9px] flex items-center h-[18px]">
            <span className="w-[102px] -mt-[1px]">Дата</span>
            <div className="w-[133px] h-[18px] border border-black flex items-center justify-end pb-[1px] shadow-[inset_-1px_-1px_0_#fff]">01-мар-2005</div>
          </div>
          <div className="mt-[8px] flex items-center h-[18px]">
            <span className="w-[102px] -mt-[2px]">Долг</span>
            <div className="w-[133px] h-[18px] border border-black flex items-center justify-end pr-[4px] pb-[1px] shadow-[inset_-1px_-1px_0_#fff]">567,00р.</div>
          </div>
          <div className="mt-[8px] flex items-center h-[18px]">
            <span className="w-[102px] -mt-[2px]">Основание</span>
            <div className="w-[211px] h-[17px] border border-black flex items-center pl-[2px] relative bg-[#ccffff]">
              <span className="bg-black text-white leading-[13px]">Долг</span>
              <ComboBtn />
            </div>
          </div>

          <div className="mt-[31px] flex pl-[147px]">
            <div className={"w-[76px] h-[35px] flex items-center justify-center " + raised}>
              <svg width="16" height="17" viewBox="0 0 16 17">
                <path d="M1.500 1.500h7v12h-7z" fill="#fff" stroke="#222" />
                <path d="M1 1l5 3v13l-5-3z" fill="#8a7a10" stroke="#222" />
                <path d="M15 8H11M11 5v6L8 8z" fill="#000080" stroke="#000080" />
              </svg>
            </div>
            <div className={"ml-[26px] w-[76px] h-[35px] flex items-center justify-center font-bold text-[14px] leading-none text-black " + raised}>
              &quot;+&quot;
            </div>
          </div>
          <div className="absolute right-[26px] top-[185px] w-[46px] h-[17px] border border-[#333] flex items-center justify-end pr-[3px] text-[12px] text-[#808080] shadow-[inset_-1px_-1px_0_#fff]">0</div>
        </div>
      </div>
    </div>
  );
};

const ComboBtn = () => (
  <div className={"absolute right-[1px] top-[0px] bottom-[0px] w-[16px] bg-[#c0c0c0] flex items-center justify-center " + raised}>
    <svg width="7" height="4" viewBox="0 0 7 4">
      <path d="M0 0h7L3.500 4z" fill="#000" />
    </svg>
  </div>
);

const WordIcon = () => (
  <svg width="16" height="16" viewBox="0 0 16 16">
    <rect x="5.500" y="2.500" width="10" height="13" fill="#fff" stroke="#6a7a90" />
    <path d="M7 8h7M7 10h7M7 12h7" stroke="#8a9ab0" />
    <rect x="0.500" y="0.500" width="10" height="10" fill="#3a5ac0" stroke="#1d2f70" />
    <path d="M2 3l1.500 5L5.500 4l2 4L9 3" stroke="#fff" fill="none" />
  </svg>
);

const TaskButton = ({ ml, label, icon }: { ml: string; label: string; icon: React.ReactNode }) => (
  <div className={"w-[160px] h-[22px] flex items-center pl-[4px] shrink-0 " + ml + " " + raised}>
    <div className="shrink-0 flex">{icon}</div>
    <span className="ml-[4px]">{label}</span>
  </div>
);

export default App;
